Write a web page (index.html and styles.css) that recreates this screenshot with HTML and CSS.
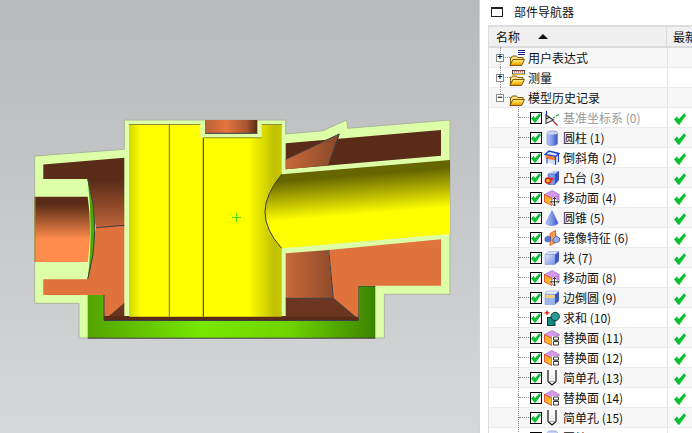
FILE: index.html
```html
<!DOCTYPE html>
<html lang="zh">
<head>
<meta charset="utf-8">
<title>部件导航器</title>
<link rel="stylesheet" href="styles.css">
</head>
<body>
<svg class="defs" width="0" height="0" aria-hidden="true">
  <defs>
    <linearGradient id="fold" x1="0" y1="0" x2="0" y2="1"><stop offset="0" stop-color="#fff08a"/><stop offset=".55" stop-color="#ffc820"/><stop offset="1" stop-color="#e88c00"/></linearGradient>
    <linearGradient id="blue" x1="0" y1="0" x2="1" y2="0"><stop offset="0" stop-color="#b9c8f6"/><stop offset=".5" stop-color="#7d96ea"/><stop offset="1" stop-color="#3550c0"/></linearGradient>
    <linearGradient id="face" x1="0" y1="0" x2="1" y2="1"><stop offset="0" stop-color="#e4ebfc"/><stop offset="1" stop-color="#6f8ae4"/></linearGradient>
    <symbol id="folder" viewBox="0 0 16 16"><path d="M1.500 15V7.500h1l1-1.500h4l1 1.500h5.500v2" fill="#ffe27a" stroke="#6e4a00" stroke-width=".9"/><path d="M.8 15.500L4 9.500h11.500l-3 6z" fill="url(#fold)" stroke="#6e4a00" stroke-width=".9"/></symbol>
    <symbol id="folder-lines" viewBox="0 0 16 16"><use href="#folder" width="16" height="16"/><path d="M9 .5h7M9 2.500h7M9 4.500h7" stroke="#20208a" stroke-width="1"/></symbol>
    <symbol id="folder-ruler" viewBox="0 0 16 16"><use href="#folder" width="16" height="16"/><rect x="3.500" y=".5" width="12" height="3.500" fill="#fff" stroke="#222" stroke-width=".8"/><path d="M5.500 .5v2M7.500 .5v2M9.500 .5v2M11.500 .5v2M13.500 .5v2" stroke="#d02020" stroke-width=".7"/><path d="M3.500 4.500h12" stroke="#e8b000"/></symbol>
    <symbol id="check" viewBox="0 0 12 12"><path d="M0 6.500L2.800 3.600 4.900 6 10.200.3 12 2.400 5.300 11.700 4.300 11.700Z" fill="#08c030"/></symbol>
    <symbol id="csys" viewBox="0 0 16 16"><path d="M2 5v8.500l7.500-3.500z M2 5l7.500 5M2 9l4-2" fill="#e8e8e8" stroke="#333" stroke-width="1.100"/><path d="M2.500 5V1" stroke="#1830d0" stroke-width="1.200"/><path d="M9 8l2-1.200M12 6l3-1.500" stroke="#18a040" stroke-width="1.200"/><path d="M9 11l4.500 4.500" stroke="#d02020" stroke-width="1.200"/></symbol>
    <symbol id="cyl" viewBox="0 0 16 16"><path d="M3 3c0-2.800 10.500-2.800 10.500 0v10.500c0 2.800-10.500 2.800-10.500 0z" fill="url(#blue)" stroke="#6c80c8" stroke-width=".6"/><ellipse cx="8.200" cy="3" rx="5.200" ry="1.700" fill="#c9d4f8"/></symbol>
    <symbol id="chamfer" viewBox="0 0 16 16"><path d="M1 4l4-3 10 2v9l-4 3-6-2z" fill="#cfe0fb"/><path d="M1 4.500L5 1l10 2.500-3.500 3z" fill="none" stroke="#1a3ccc" stroke-width="1.300"/><path d="M1.500 5l10 2v3.500l-10-2z" fill="#f07838"/><path d="M3 8v5.500M11.500 7v8M14.500 4v8" stroke="#1a3ccc" stroke-width="1.100"/></symbol>
    <symbol id="boss" viewBox="0 0 16 16"><path d="M4 4l4-3h7v9l-4 4.500H4z" fill="#b8c6f4"/><path d="M4 4h7v10.500H4z" fill="#7e98ea" stroke="#3a50b0" stroke-width=".5"/><path d="M11 4l4-3v9l-4 4.500z" fill="#3550c0"/><ellipse cx="7.500" cy="1.800" rx="1.500" ry=".5" fill="#fff"/><circle cx="4" cy="10.500" r="2.600" fill="#f8c030" stroke="#d82010" stroke-width="1.500"/><circle cx="8" cy="9" r="1.500" fill="#e03020"/></symbol>
    <symbol id="move" viewBox="0 0 16 16"><path d="M.5 4.500L8 .5l7.500 4L8 8.500z" fill="#d49ce8" stroke="#9a60b8" stroke-width=".6"/><path d="M.5 4.500L8 8.500V15.500L.5 12z" fill="#ffb428" stroke="#e03818" stroke-width=".8"/><path d="M8 8.500l7.500-4V12L8 15.500z" fill="#b884d8"/><path d="M10.500 7.500v8.500M6.500 11.800h8.500" stroke="#fff" stroke-width="3.500"/><path d="M10.500 7.500v8.500M6.500 11.800h8.500M9 9l1.500-1.500L12 9M9 14.500l1.500 1.500 1.500-1.500M8 10.300l-1.500 1.500L8 13.300M13.500 10.300l1.500 1.500-1.500 1.500" fill="none" stroke="#222" stroke-width=".9"/></symbol>
    <symbol id="cone" viewBox="0 0 16 16"><path d="M8 .5L2 12.800c0 3.600 12 3.600 12 0z" fill="url(#blue)" stroke="#6c80c8" stroke-width=".6"/></symbol>
    <symbol id="mirror" viewBox="0 0 16 16"><path d="M6 3.500l5.500-3v12l-5.500 3z" fill="#f8a050" stroke="#e04818" stroke-width=".8"/><path d="M1 8l2.500-2 3 1v4l-3 1-2.500-1z" fill="#5878e0" stroke="#2c44a8" stroke-width=".6"/><path d="M9 9l3-3 3.500 2v3L12 13l-3-1.500z" fill="#9ab0f0" stroke="#3a50b0" stroke-width=".8"/></symbol>
    <symbol id="block" viewBox="0 0 16 16"><path d="M1 4.500L4.500 1.500h10.500L11 4.500z" fill="#d6dffa" stroke="#8898d4" stroke-width=".5"/><path d="M1 4.500h10v10H1z" fill="url(#face)" stroke="#7d8ccc" stroke-width=".5"/><path d="M11 4.500l4-3V11l-4 3.500z" fill="#3e5bc4"/></symbol>
    <symbol id="blend" viewBox="0 0 16 16"><path d="M1 4q0-3 4-3h10l-4 3.500z" fill="#e2eafc" stroke="#8898d4" stroke-width=".5"/><path d="M1 4.500h10v10H1z" fill="#9eb4f0" stroke="#7d8ccc" stroke-width=".5"/><path d="M11 4.500l4-3V11l-4 3.500z" fill="#3e5bc4"/><path d="M1.500 5h9v3h-9z" fill="#f8d070"/></symbol>
    <symbol id="unite" viewBox="0 0 16 16"><path d="M3 .5v4.500M.5 2.800h5" stroke="#e01010" stroke-width="1.300"/><rect x="3.500" y="7.500" width="7.500" height="8" fill="#128a84" stroke="#062e2e" stroke-width=".9"/><circle cx="11.200" cy="6.500" r="4.200" fill="#2a9c94" stroke="#062e2e" stroke-width=".9"/></symbol>
    <symbol id="replace" viewBox="0 0 16 16"><path d="M.5 4.500L8 .5l7.500 4L8 8.500z" fill="#d49ce8" stroke="#9a60b8" stroke-width=".6"/><path d="M.5 4.500L8 8.500V15.500L.5 12z" fill="#ffb428" stroke="#e03818" stroke-width=".8"/><path d="M8 8.500l7.500-4V12L8 15.500z" fill="#b884d8"/><rect x="8" y="6" width="8" height="10" fill="#fff"/><path d="M9.500 7h5v3h-5zM11 10v1.500M13 10v1.500M9.500 11.500h5V15h-5z" fill="none" stroke="#333" stroke-width="1"/></symbol>
    <symbol id="hole" viewBox="0 0 16 16"><path d="M4 0v11.500l4 3.500 4-3.500V0" fill="none" stroke="#111" stroke-width="1.200"/><path d="M4 11.500h8" stroke="#888" stroke-width=".7"/></symbol>
  </defs>
</svg>

<main class="app">
  <section class="viewport">
    <svg class="model" viewBox="0 0 479 433" width="479" height="433" role="img" aria-label="零件剖视图">
      <defs>
        <linearGradient id="cavTop" gradientUnits="userSpaceOnUse" x1="0" y1="165" x2="0" y2="228"><stop offset=".25" stop-color="#5a2c17"/><stop offset="1" stop-color="#c0653a"/></linearGradient>
        <linearGradient id="copper" gradientUnits="userSpaceOnUse" x1="0" y1="197" x2="0" y2="262"><stop offset=".12" stop-color="#5a2c17"/><stop offset=".65" stop-color="#ff8c4c"/><stop offset="1" stop-color="#ff8c4c"/></linearGradient>
        <linearGradient id="lid" gradientUnits="userSpaceOnUse" x1="205" y1="0" x2="257" y2="0"><stop offset="0" stop-color="#b96038"/><stop offset=".4" stop-color="#e5743d"/><stop offset=".8" stop-color="#a8552f"/><stop offset="1" stop-color="#5a2c17"/></linearGradient>
        <linearGradient id="plate" gradientUnits="userSpaceOnUse" x1="88" y1="0" x2="375" y2="0"><stop offset="0" stop-color="#52a400"/><stop offset=".4" stop-color="#78e800"/><stop offset=".7" stop-color="#6ed400"/><stop offset="1" stop-color="#3c8400"/></linearGradient>
        <linearGradient id="body" gradientUnits="userSpaceOnUse" x1="129" y1="0" x2="282" y2="0"><stop offset="0" stop-color="#d4d400"/><stop offset=".08" stop-color="#ffff00"/><stop offset=".78" stop-color="#ffff00"/><stop offset=".95" stop-color="#c0c000"/><stop offset="1" stop-color="#c8c800"/></linearGradient>
        <linearGradient id="pipe" gradientUnits="userSpaceOnUse" x1="360" y1="165" x2="364" y2="214"><stop offset=".2" stop-color="#666600"/><stop offset="1" stop-color="#ffff00"/></linearGradient>
        <linearGradient id="wedge" gradientUnits="userSpaceOnUse" x1="285" y1="0" x2="335" y2="0"><stop offset="0" stop-color="#c96a3a"/><stop offset="1" stop-color="#8c4a2a"/></linearGradient>
      </defs>
      <path class="shell" d="M34.700 156L124.300 149.300V120H285.700V134L323 130.700 346.700 120 347.700 128.300 450 120V294.300H384.300V338H79V303.300H34.700Z"/>
      <path class="solid" fill="url(#cavTop)" d="M43.300 164.500L124.300 157.700V226L96 228 87.700 179H43.300Z"/>
      <path class="solid" fill="#e0723b" d="M96 227.700L124.300 225.300V303L104 320V295H43.300V279.300H87.700Z"/>
      <path class="solid" fill="#6b3520" d="M104 320L124.300 302.700V320Z"/>
      <path class="edge" d="M96 227.700L124.300 225.300"/>
      <path class="solid" fill="url(#copper)" d="M34.700 196.700H87.700Q92.500 230 87.700 262H34.700Z"/>
      <path class="line-soft" d="M35 196.700V262"/>
      <path class="solid" fill="#4ea800" d="M87.700 179Q102 230 87.700 279.300 93.500 230 87.700 179Z"/>
      <path class="edge" d="M87.700 179Q102 230 87.700 279.300"/>
      <path class="solid" fill="#5a2c17" d="M104 316H358.300V320.500H104Z"/>
      <path class="solid" fill="url(#plate)" d="M87.700 295H104V320.500H358.300V286H375.300V338H87.700Z"/>
      <path class="edge" d="M87.700 338.200H375.300M104 295V320.500H358.300V286H375.300"/>
      <path class="solid" fill="#5a2c17" d="M285.700 143.300L441 130V155.700L285.700 169.300Z"/>
      <path class="solid" fill="url(#wedge)" d="M285.700 159.300L339.300 134 328.300 165.300 285.700 169.300Z"/>
      <path class="edge" d="M285.700 159.300L339.300 134 328.300 165.300"/>
      <path class="solid" fill="url(#wedge)" d="M285.700 253.300L328.300 250 333.300 298.300H285.700Z"/>
      <path class="solid" fill="#e0723b" d="M328.700 250L441 239.300V285.700H358.300V319.300L333.300 298.300Z"/>
      <path class="solid" fill="#6b3520" d="M285.700 298.300H333.300L358.300 319.300V316.700H285.700Z"/>
      <path class="edge" d="M328.700 250L333.300 298.300 358.300 319.300M285.700 298.300H333.300"/>
      <path class="solid" fill="url(#lid)" d="M205 120H257.300V133.300H205Z"/>
      <path class="edge" d="M205 133.300H257.300"/>
      <path class="solid" fill="url(#body)" d="M129 124.300H200.300V137.500H261.700V124.300H281.700V316.700H129Z"/>
      <path class="line-soft" d="M129 124.500H200.500M203.700 137.800H261.700M261.700 124.500H281.700"/>
      <path class="line-grey" d="M169.300 124.500V316.700"/>
      <path class="line-dark" d="M203.300 137.800V316.700"/>
      <path class="solid" fill="url(#pipe)" d="M281.700 174.300L450 160V234L281.700 248.300Q265 230 265 211.700 265 195 281.700 174.300Z"/>
      <path class="edge" d="M281.700 174.300Q265 195 265 211.700 265 230 281.700 248.300"/>
      <path class="marker" d="M232 217.500h9M236.500 213v9"/>
    </svg>
  </section>

  <aside class="panel">
    <header class="title">
      <span class="title-box"></span>
      <span class="title-text">部件导航器</span>
    </header>
    <div class="tree">
      <div class="head">
        <div class="head-name">名称<span class="sort"></span></div>
        <div class="head-new">最新</div>
      </div>
      <div class="row top"><span class="toggle">+</span><svg class="ico"><use href="#folder-lines"/></svg><span class="name">用户表达式</span><span class="state"></span></div>
      <div class="row top"><span class="toggle">+</span><svg class="ico"><use href="#folder-ruler"/></svg><span class="name">测量</span><span class="state"></span></div>
      <div class="row top last"><span class="toggle">−</span><svg class="ico"><use href="#folder"/></svg><span class="name">模型历史记录</span><span class="state"></span></div>
      <div class="row item"><span class="box"><svg class="tick"><use href="#check"/></svg></span><svg class="ico"><use href="#csys"/></svg><span class="name dim">基准坐标系 (0)</span><span class="state"><svg class="ok"><use href="#check"/></svg></span></div>
      <div class="row item"><span class="box"><svg class="tick"><use href="#check"/></svg></span><svg class="ico"><use href="#cyl"/></svg><span class="name">圆柱 (1)</span><span class="state"><svg class="ok"><use href="#check"/></svg></span></div>
      <div class="row item"><span class="box"><svg class="tick"><use href="#check"/></svg></span><svg class="ico"><use href="#chamfer"/></svg><span class="name">倒斜角 (2)</span><span class="state"><svg class="ok"><use href="#check"/></svg></span></div>
      <div class="row item"><span class="box"><svg class="tick"><use href="#check"/></svg></span><svg class="ico"><use href="#boss"/></svg><span class="name">凸台 (3)</span><span class="state"><svg class="ok"><use href="#check"/></svg></span></div>
      <div class="row item"><span class="box"><svg class="tick"><use href="#check"/></svg></span><svg class="ico"><use href="#move"/></svg><span class="name">移动面 (4)</span><span class="state"><svg class="ok"><use href="#check"/></svg></span></div>
      <div class="row item"><span class="box"><svg class="tick"><use href="#check"/></svg></span><svg class="ico"><use href="#cone"/></svg><span class="name">圆锥 (5)</span><span class="state"><svg class="ok"><use href="#check"/></svg></span></div>
      <div class="row item"><span class="box"><svg class="tick"><use href="#check"/></svg></span><svg class="ico"><use href="#mirror"/></svg><span class="name">镜像特征 (6)</span><span class="state"><svg class="ok"><use href="#check"/></svg></span></div>
      <div class="row item"><span class="box"><svg class="tick"><use href="#check"/></svg></span><svg class="ico"><use href="#block"/></svg><span class="name">块 (7)</span><span class="state"><svg class="ok"><use href="#check"/></svg></span></div>
      <div class="row item"><span class="box"><svg class="tick"><use href="#check"/></svg></span><svg class="ico"><use href="#move"/></svg><span class="name">移动面 (8)</span><span class="state"><svg class="ok"><use href="#check"/></svg></span></div>
      <div class="row item"><span class="box"><svg class="tick"><use href="#check"/></svg></span><svg class="ico"><use href="#blend"/></svg><span class="name">边倒圆 (9)</span><span class="state"><svg class="ok"><use href="#check"/></svg></span></div>
      <div class="row item"><span class="box"><svg class="tick"><use href="#check"/></svg></span><svg class="ico"><use href="#unite"/></svg><span class="name">求和 (10)</span><span class="state"><svg class="ok"><use href="#check"/></svg></span></div>
      <div class="row item"><span class="box"><svg class="tick"><use href="#check"/></svg></span><svg class="ico"><use href="#replace"/></svg><span class="name">替换面 (11)</span><span class="state"><svg class="ok"><use href="#check"/></svg></span></div>
      <div class="row item"><span class="box"><svg class="tick"><use href="#check"/></svg></span><svg class="ico"><use href="#replace"/></svg><span class="name">替换面 (12)</span><span class="state"><svg class="ok"><use href="#check"/></svg></span></div>
      <div class="row item"><span class="box"><svg class="tick"><use href="#check"/></svg></span><svg class="ico"><use href="#hole"/></svg><span class="name">简单孔 (13)</span><span class="state"><svg class="ok"><use href="#check"/></svg></span></div>
      <div class="row item"><span class="box"><svg class="tick"><use href="#check"/></svg></span><svg class="ico"><use href="#replace"/></svg><span class="name">替换面 (14)</span><span class="state"><svg class="ok"><use href="#check"/></svg></span></div>
      <div class="row item"><span class="box"><svg class="tick"><use href="#check"/></svg></span><svg class="ico"><use href="#hole"/></svg><span class="name">简单孔 (15)</span><span class="state"><svg class="ok"><use href="#check"/></svg></span></div>
      <div class="row item"><span class="box"></span><svg class="ico"><use href="#cyl"/></svg><span class="name">圆柱 (16)</span><span class="state"></span></div>
    </div>
  </aside>
</main>
</body>
</html>
```
FILE: styles.css
```css
* { box-sizing: border-box; }
html, body { margin: 0; padding: 0; height: 433px; overflow: hidden; background: #fff; }
body { font: 12px/20px "Noto Sans CJK SC", "Liberation Sans", sans-serif; color: #111; }
.defs { position: absolute; }
.app { display: flex; width: 692px; height: 433px; }

.viewport { width: 479px; height: 433px; flex: none; background: linear-gradient(#b7b9ba, #d6d7d9); }
.model { display: block; }
.shell { fill: #dcffa8; stroke: #a9b4a0; stroke-width: 1; }
.solid { stroke: none; }
.edge { fill: none; stroke: #3c3c44; stroke-width: 1; }
.line-soft { fill: none; stroke: #8e8e30; stroke-width: 1; }
.line-grey { fill: none; stroke: #6e6e28; stroke-width: 1; }
.line-dark { fill: none; stroke: #2a2a20; stroke-width: 1; }
.marker { fill: none; stroke: #4ee000; stroke-width: 1; }

.panel { flex: 1; min-width: 0; border-left: 1px solid #d4d4d4; padding-left: 8px; background: #fff; }
.title { display: flex; align-items: center; height: 25px; padding-bottom: 2px; }
.title-box { width: 12px; height: 10px; margin-left: 3px; border: 1px solid #222; border-top-width: 2px; }
.title-text { margin-left: 11px; }

.tree { border: 1px solid #dcdcdc; border-width: 2px 0 0 1px; width: 210px; overflow: hidden; }
.head { display: flex; height: 21px; background: #f0f0f0; border-bottom: 2px solid #dcdcdc; }
.head-name { position: relative; flex: none; width: 178px; padding-left: 7px; line-height: 19px; border-right: 1px solid #dcdcdc; }
.sort { position: absolute; left: 49px; top: 7px; width: 0; height: 0; border: 5px solid transparent; border-top: 0; border-bottom: 5px solid #111; }
.head-new { flex: none; width: 32px; padding-left: 6px; line-height: 19px; white-space: nowrap; overflow: hidden; }

.row { position: relative; display: flex; align-items: center; height: 20px; border-bottom: 1px solid #ebebeb; background: #fff; }
.row:nth-child(even) { background: #f7f7f7; }
.name { flex: 1; white-space: nowrap; }
.dim { color: #999; }
.state { position: absolute; left: 178px; top: 0; width: 32px; height: 19px; border-left: 1px solid #e4e4e4; padding: 5px 0 0 6px; }

.top { z-index: 0; }
.top .toggle { position: relative; z-index: 1; flex: none; width: 8px; height: 8px; margin-left: 7px; border: 1px solid #8c8c8c; background: #fff; font: bold 9px/6px "Liberation Mono", monospace; text-align: center; color: #000; }
.top .ico { margin-left: 5px; margin-right: 3px; }
.top::before { content: ""; position: absolute; left: 11px; top: -1px; height: 20px; border-left: 1px dotted #999; }
.top.last::before { height: 7px; }
.top::after { content: ""; position: absolute; left: 16px; top: 9px; width: 5px; border-top: 1px dotted #999; }

.ico { width: 16px; height: 16px; flex: none; }
.item { padding-left: 41px; }
.item::before { content: ""; position: absolute; left: 29px; top: -1px; height: 21px; border-left: 1px dotted #888; }
.item::after { content: ""; position: absolute; left: 30px; top: 9px; width: 10px; border-top: 1px dotted #888; }
.box { display: block; flex: none; width: 12px; height: 12px; padding: 0; border: 1px solid #000; background: #fff; }
.tick { display: block; width: 10px; height: 10px; }
.item .ico { margin-left: 2px; margin-right: 3px; }
.ok { display: block; width: 12px; height: 12px; }
```
